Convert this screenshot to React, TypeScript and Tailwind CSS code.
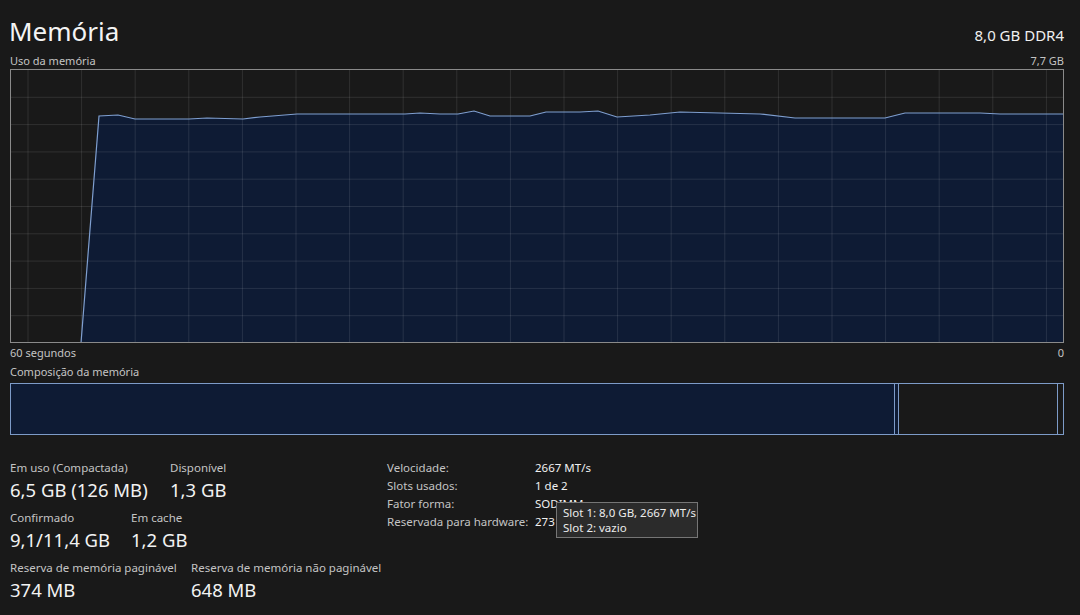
import React from "react";

const FONT = "font-['Noto_Sans','Open_Sans',sans-serif]";

// usage line, in graph coordinates (page x - 11, page y - 70)
const usage: [number, number][] = [
  [81, 343], [99, 116], [118, 115], [135, 119], [189, 119], [207, 118], [243, 119],
  [260, 117], [297, 114], [350, 114], [405, 114], [420, 113], [440, 114], [458, 114],
  [474, 111], [490, 116], [530, 116], [546, 112], [580, 112], [598, 111], [617, 117],
  [650, 115], [680, 112], [760, 114], [795, 118], [885, 118], [905, 113], [980, 113],
  [1000, 114], [1064, 114],
].map(([x, y]) => [x - 11, y - 70]);

const UsageGraph = () => {
  const w = 1052;
  const h = 272;
  const line = usage.map(([x, y]) => `${x},${y}`).join(" ");
  const area = `${usage[0][0]},${h} ${line} ${w},${h}`;
  return (
    <div className="w-[1054px] h-[274px] border border-[#8a8a8a]">
      <svg width={w} height={h} viewBox={`0 0 ${w} ${h}`} className="block">
        <polygon points={area} fill="#0e1b34" />
        {Array.from({ length: 20 }).map((_, i) => (
          <line key={"v" + i} x1={17 + i * 53.6} y1={0} x2={17 + i * 53.6} y2={h} stroke="#ffffff" strokeOpacity={0.1} />
        ))}
        {Array.from({ length: 9 }).map((_, i) => (
          <line key={"h" + i} x1={0} y1={(i + 1) * 27.3} x2={w} y2={(i + 1) * 27.3} stroke="#ffffff" strokeOpacity={0.1} />
        ))}
        <polyline points={line} fill="none" stroke="#7f9fd0" strokeWidth={1.2} />
      </svg>
    </div>
  );
};

const Stat = ({ label, value, w }: { label: string; value: string; w?: string }) => (
  <div className={`${w ?? ""} whitespace-nowrap`}>
    <div className="text-[11.5px] leading-[16px] text-[#c4c4c4]">{label}</div>
    <div className="text-[18.5px] leading-[26px] text-[#f2f2f2] mt-[1px]">{value}</div>
  </div>
);

const specs = [
  { label: "Velocidade:", value: "2667 MT/s" },
  { label: "Slots usados:", value: "1 de 2" },
  { label: "Fator forma:", value: "SODIMM" },
  { label: "Reservada para hardware:", value: "273 MB" },
];

export default function App() {
  return (
    <div className={`w-[1080px] h-[615px] overflow-hidden bg-[#191919] pl-[10px] ${FONT}`}>
      {/* cabeçalho */}
      <div className="flex justify-between items-end w-[1054px] pt-[15px]">
        <div className="text-[26px] leading-[32px] text-[#f4f4f4] -ml-[1px]">Memória</div>
        <div className="text-[15px] leading-[20px] text-[#f0f0f0] mb-[2px]">8,0 GB DDR4</div>
      </div>
      <div className="flex justify-between w-[1054px] text-[11px] leading-[16px] text-[#c4c4c4] mt-[6px]">
        <span>Uso da memória</span>
        <span>7,7 GB</span>
      </div>

      <UsageGraph />

      <div className="flex justify-between w-[1054px] text-[11px] leading-[16px] text-[#c4c4c4] mt-[2px]">
        <span>60 segundos</span>
        <span>0</span>
      </div>
      <div className="text-[11px] leading-[16px] text-[#c4c4c4] mt-[3px] mb-[3px]">Composição da memória</div>

      {/* composição */}
      <div className="flex w-[1054px] h-[52px] border border-[#7d9bc8]">
        <div className="w-[884px] bg-[#0e1b34] border-r border-[#7d9bc8]" />
        <div className="w-[4px] bg-[#0e1b34] border-r border-[#7d9bc8]" />
        <div className="w-[159px] border-r border-[#7d9bc8]" />
        <div className="flex-1" />
      </div>

      {/* estatísticas */}
      <div className="flex mt-[25px]">
        <div className="w-[377px] flex flex-col gap-[7px]">
          <div className="flex">
            <Stat w="w-[160px]" label="Em uso (Compactada)" value="6,5 GB (126 MB)" />
            <Stat label="Disponível" value="1,3 GB" />
          </div>
          <div className="flex">
            <Stat w="w-[121px]" label="Confirmado" value="9,1/11,4 GB" />
            <Stat label="Em cache" value="1,2 GB" />
          </div>
          <div className="flex">
            <Stat w="w-[181px]" label="Reserva de memória paginável" value="374 MB" />
            <Stat label="Reserva de memória não paginável" value="648 MB" />
          </div>
        </div>

        <div className="relative flex flex-col text-[11.5px] leading-[18px] text-[#c4c4c4] whitespace-nowrap -mt-[1px]">
          {specs.map((s) => (
            <div key={s.label} className="flex">
              <span className="w-[148px]">{s.label}</span>
              <span className="text-[#f0f0f0]">{s.value}</span>
            </div>
          ))}

          {/* dica */}
          <div className="absolute left-[169px] top-[43px] w-[142px] px-[6px] py-[2px] bg-[#2b2b2b] border border-[#767676] text-[11.5px] leading-[15px] text-[#ececec]">
            <div>Slot 1: 8,0 GB, 2667 MT/s</div>
            <div>Slot 2: vazio</div>
          </div>
        </div>
      </div>
    </div>
  );
}
